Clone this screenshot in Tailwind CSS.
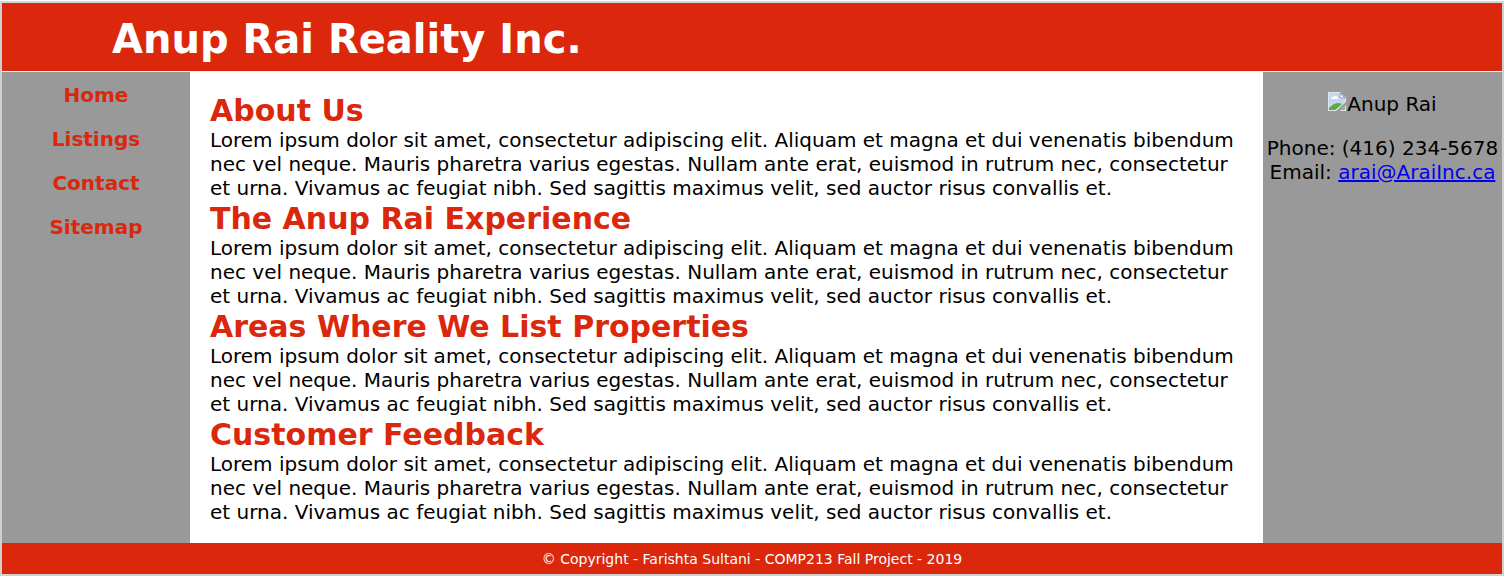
<!DOCTYPE html>
<html lang="en" class="bg-white pt-px">
<head>
<meta charset="utf-8">
<title>Anup Rai Reality Inc.</title>
<script src="https://cdn.jsdelivr.net/npm/@tailwindcss/browser@4"></script>
</head>
<body class="min-h-[calc(100vh-1px)] flex flex-col border-2 border-[#d0d0d0] border-t-[#d3d6dc] bg-white font-['Verdana','DejaVu_Sans',sans-serif] text-[20px] leading-6 text-black">
<header class="bg-[#db270c] px-[110px] pt-3 pb-2 border-b border-[#f4f4f4]">
<h1 class="text-[40px] leading-[48px] font-bold text-white">Anup Rai Reality Inc.</h1>
</header>
<div class="flex flex-1">
<nav class="w-[188px] shrink-0 bg-[#999999] pt-[11px]">
<ul class="flex flex-col gap-5 text-center font-bold text-[#db270c]">
<li><a href="#">Home</a></li>
<li><a href="#">Listings</a></li>
<li><a href="#">Contact</a></li>
<li><a href="#">Sitemap</a></li>
</ul>
</nav>
<main class="flex-1 min-w-0 px-5 pt-5 pb-[19px]">
<section><h2 class="pt-0.5 text-[30px] leading-[34px] font-bold text-[#db270c]">About Us</h2>
<p>Lorem ipsum dolor sit amet, consectetur adipiscing elit. Aliquam et magna et dui venenatis bibendum nec vel neque. Mauris pharetra varius egestas. Nullam ante erat, euismod in rutrum nec, consectetur et urna. Vivamus ac feugiat nibh. Sed sagittis maximus velit, sed auctor risus convallis et.</p></section>
<section><h2 class="pt-0.5 text-[30px] leading-[34px] font-bold text-[#db270c]">The Anup Rai Experience</h2>
<p>Lorem ipsum dolor sit amet, consectetur adipiscing elit. Aliquam et magna et dui venenatis bibendum nec vel neque. Mauris pharetra varius egestas. Nullam ante erat, euismod in rutrum nec, consectetur et urna. Vivamus ac feugiat nibh. Sed sagittis maximus velit, sed auctor risus convallis et.</p></section>
<section><h2 class="pt-0.5 text-[30px] leading-[34px] font-bold text-[#db270c]">Areas Where We List Properties</h2>
<p>Lorem ipsum dolor sit amet, consectetur adipiscing elit. Aliquam et magna et dui venenatis bibendum nec vel neque. Mauris pharetra varius egestas. Nullam ante erat, euismod in rutrum nec, consectetur et urna. Vivamus ac feugiat nibh. Sed sagittis maximus velit, sed auctor risus convallis et.</p></section>
<section><h2 class="pt-0.5 text-[30px] leading-[34px] font-bold text-[#db270c]">Customer Feedback</h2>
<p>Lorem ipsum dolor sit amet, consectetur adipiscing elit. Aliquam et magna et dui venenatis bibendum nec vel neque. Mauris pharetra varius egestas. Nullam ante erat, euismod in rutrum nec, consectetur et urna. Vivamus ac feugiat nibh. Sed sagittis maximus velit, sed auctor risus convallis et.</p></section>
</main>
<aside class="w-[239px] shrink-0 bg-[#999999] pt-5 text-center">
<div class="flex justify-center gap-px">
<svg class="w-[18px] h-5" viewBox="0 0 18 20" aria-hidden="true">
<path d="M0 0h12l6 6v4l-10 9H0z" fill="#dfe6ef"/>
<path d="M1 1h10v6h6v3l-9 8H1z" fill="#c3d7f3"/>
<path d="M3 7q0-2 2-2 1-2 3-1 2 0 2 3z" fill="#fff"/>
<path d="M1 18v-2q5-5 9-5 2 0 4 1l-7 6z" fill="#5aad38"/>
<path d="M12 1v5h5z" fill="#fff" stroke="#8d959f"/>
<path d="M12 19l6-6v6z" fill="#dfe6ef"/>
<path d="M13 18l4-4v4z" fill="#86bd74"/>
</svg>
<span>Anup Rai</span></div>
<p class="mt-5 whitespace-nowrap">Phone: (416) 234-5678<br>Email: <a class="underline text-[#0000ee]" href="mailto:arai@AraiInc.ca">arai@AraiInc.ca</a></p>
</aside>
</div>
<footer class="bg-[#db270c] pt-2 pb-[7px] text-center text-[14px] leading-4 text-white">© Copyright - Farishta Sultani - COMP213 Fall Project - 2019</footer>
</body>
</html>
